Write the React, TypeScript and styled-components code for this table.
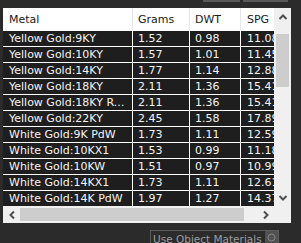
import React from "react";
import styled, { createGlobalStyle } from "styled-components";

interface Material {
  metal: string;
  grams: string;
  dwt: string;
  spg: string;
}

const materials: Material[] = [
  { metal: "Yellow Gold:9KY", grams: "1.52", dwt: "0.98", spg: "11.08" },
  { metal: "Yellow Gold:10KY", grams: "1.57", dwt: "1.01", spg: "11.45" },
  { metal: "Yellow Gold:14KY", grams: "1.77", dwt: "1.14", spg: "12.88" },
  { metal: "Yellow Gold:18KY", grams: "2.11", dwt: "1.36", spg: "15.41" },
  { metal: "Yellow Gold:18KY Rose", grams: "2.11", dwt: "1.36", spg: "15.41" },
  { metal: "Yellow Gold:22KY", grams: "2.45", dwt: "1.58", spg: "17.89" },
  { metal: "White Gold:9K PdW", grams: "1.73", dwt: "1.11", spg: "12.59" },
  { metal: "White Gold:10KX1", grams: "1.53", dwt: "0.99", spg: "11.18" },
  { metal: "White Gold:10KW", grams: "1.51", dwt: "0.97", spg: "10.99" },
  { metal: "White Gold:14KX1", grams: "1.73", dwt: "1.11", spg: "12.61" },
  { metal: "White Gold:14K PdW", grams: "1.97", dwt: "1.27", spg: "14.37" },
];

type Dir = "up" | "down" | "left" | "right";

const rotation: Record<Dir, number> = { up: 0, right: 90, down: 180, left: 270 };

const Chevron: React.FC<{ dir: Dir }> = ({ dir }) => (
  <svg width="10" height="10" viewBox="0 0 10 10" style={{ transform: `rotate(${rotation[dir]}deg)` }}>
    <polyline points="1.5,7 5,3.5 8.5,7" fill="none" stroke="#505050" strokeWidth="2" />
  </svg>
);

const App: React.FC = () => {
  return (
    <>
      <GlobalStyle />
      <Page>
        <TopBar>
          <ToolButton w={37} />
          <ToolButton w={45} />
        </TopBar>
        <Panel>
          <Viewport>
            <HeaderRow>
              <HeaderCell>Metal</HeaderCell>
              <HeaderCell num>Grams</HeaderCell>
              <HeaderCell num>DWT</HeaderCell>
              <HeaderCell>SPG</HeaderCell>
            </HeaderRow>
            {materials.map((m) => (
              <BodyRow key={m.metal}>
                <BodyCell>{m.metal}</BodyCell>
                <BodyCell num>{m.grams}</BodyCell>
                <BodyCell num>{m.dwt}</BodyCell>
                <BodyCell>{m.spg}</BodyCell>
              </BodyRow>
            ))}
          </Viewport>
          <VScroll>
            <ArrowButton>
              <Chevron dir="up" />
            </ArrowButton>
            <VTrack>
              <VThumb />
            </VTrack>
            <ArrowButton>
              <Chevron dir="down" />
            </ArrowButton>
          </VScroll>
          <HScroll>
            <ArrowButton>
              <Chevron dir="left" />
            </ArrowButton>
            <HTrack>
              <HThumb />
            </HTrack>
            <ArrowButton>
              <Chevron dir="right" />
            </ArrowButton>
          </HScroll>
          <Corner />
        </Panel>
        <Footer>
          <OptionBox>
            <OptionLabel>Use Object Materials</OptionLabel>
            <OptionButton>
              <svg width="9" height="9" viewBox="0 0 9 9">
                <circle cx="4.5" cy="4.5" r="3.5" fill="none" stroke="#8a8a8a" strokeWidth="1" />
              </svg>
            </OptionButton>
          </OptionBox>
        </Footer>
      </Page>
    </>
  );
};

export default App;

const GlobalStyle = createGlobalStyle`
  body {
    margin: 0;
    background: #2b2b2b;
    font-family: "DejaVu Sans", Verdana, sans-serif;
  }
`;

const Page = styled.div`
  width: 301px;
  height: 243px;
  overflow: hidden;
  background: #2b2b2b;
`;

const TopBar = styled.div`
  height: 8px;
  display: flex;
  justify-content: flex-end;
  align-items: flex-start;
  gap: 3px;
  padding-right: 13px;
  box-sizing: border-box;
`;

const ToolButton = styled.div<{ w: number }>`
  width: ${(p) => p.w}px;
  height: 2px;
  background: #595959;
`;

const Panel = styled.div`
  margin-left: 3px;
  width: 288px;
  height: 215px;
  display: grid;
  grid-template-columns: 271px 17px;
  grid-template-rows: 198px 17px;
  background: #f0f0f0;
`;

const Viewport = styled.div`
  overflow: hidden;
  background: #ffffff;
`;

const RowBase = styled.div`
  display: grid;
  grid-template-columns: 130px 57px 51px 70px;
  box-sizing: border-box;
  font-size: 11px;
`;

const HeaderRow = styled(RowBase)`
  height: 22px;
  background: #ffffff;
  color: #1a1a22;
`;

const BodyRow = styled(RowBase)`
  height: 16px;
  border-top: 1px solid #ffffff;
  background: #1e1e1e;
  color: #f4f4f4;
`;

const CellBase = styled.div<{ num?: boolean }>`
  display: flex;
  align-items: center;
  padding-left: ${(p) => (p.num ? 5 : 6)}px;
  box-sizing: border-box;
  white-space: nowrap;
  overflow: hidden;
`;

const HeaderCell = styled(CellBase)`
  border-right: 1px solid #e3e6ea;
`;

const BodyCell = styled(CellBase)`
  display: block;
  line-height: 15px;
  padding-right: 2px;
  text-overflow: ellipsis;
  border-right: 1px solid #ffffff;
`;

const VScroll = styled.div`
  display: flex;
  flex-direction: column;
  background: #f0f0f0;
`;

const HScroll = styled.div`
  display: flex;
  background: #f0f0f0;
`;

const ArrowButton = styled.div`
  width: 17px;
  height: 17px;
  flex: none;
  display: flex;
  align-items: center;
  justify-content: center;
`;

const VTrack = styled.div`
  flex: 1;
  padding: 9px 2px 0;
`;

const VThumb = styled.div`
  height: 53px;
  background: #cdcdcd;
`;

const HTrack = styled.div`
  flex: 1;
  padding: 2px 0;
`;

const HThumb = styled.div`
  width: 224px;
  height: 13px;
  background: #cdcdcd;
`;

const Corner = styled.div`
  background: #f0f0f0;
`;

const Footer = styled.div`
  display: flex;
  padding: 7px 0 0 150px;
`;

const OptionBox = styled.div`
  width: 129px;
  height: 20px;
  display: flex;
  align-items: flex-start;
  justify-content: space-between;
  border: 1px solid #5c5c5c;
  box-sizing: border-box;
`;

const OptionLabel = styled.span`
  flex: 1;
  min-width: 0;
  padding: 2px 0 0 2px;
  font-size: 10.5px;
  line-height: 13px;
  color: #9c9c9c;
  white-space: nowrap;
  overflow: hidden;
`;

const OptionButton = styled.div`
  width: 13px;
  height: 13px;
  flex: none;
  display: flex;
  align-items: center;
  justify-content: center;
  background: #505050;
`;
